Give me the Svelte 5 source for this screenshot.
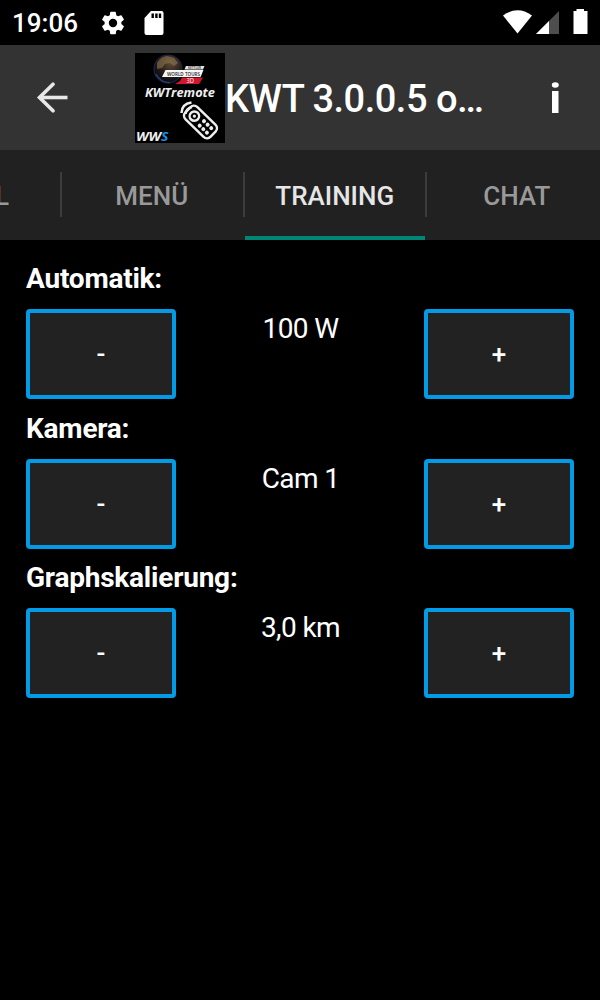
<script>
    let activeTab = $state('TRAINING');
    let watt = $state(100);
    let cam = $state(1);
    let scale = $state(3);

    const tabs = ['MENÜ', 'TRAINING', 'CHAT'];

    let controls = $derived([
        { label: 'Automatik:', value: `${watt} W`, step: (d) => (watt += d * 5) },
        { label: 'Kamera:', value: `Cam ${cam}`, step: (d) => (cam = Math.max(1, cam + d)) },
        { label: 'Graphskalierung:', value: `${scale.toFixed(1).replace('.', ',')} km`, step: (d) => (scale = Math.max(0.5, scale + d * 0.5)) }
    ]);
</script>

<div class="screen">
    <div class="statusbar">
        <span class="time">19:06</span>
        <svg class="gear" width="28" height="28" viewBox="0 0 24 24" fill="#fff">
            <path d="M19.14 12.94c.04-.3.06-.61.06-.94s-.02-.64-.07-.94l2.03-1.58a.49.49 0 0 0 .12-.61l-1.92-3.32a.49.49 0 0 0-.59-.22l-2.39.96a7 7 0 0 0-1.62-.94l-.36-2.54A.48.48 0 0 0 13.92 2.4h-3.84a.48.48 0 0 0-.47.41l-.36 2.54a7.3 7.3 0 0 0-1.62.94l-2.39-.96a.48.48 0 0 0-.59.22L2.74 8.87a.48.48 0 0 0 .12.61l2.03 1.58c-.05.3-.09.63-.09.94s.02.64.07.94l-2.03 1.58a.49.49 0 0 0-.12.61l1.92 3.32c.12.22.37.29.59.22l2.39-.96c.5.38 1.03.7 1.62.94l.36 2.54c.05.24.24.41.48.41h3.84c.24 0 .44-.17.47-.41l.36-2.54a7 7 0 0 0 1.62-.94l2.39.96c.22.08.47 0 .59-.22l1.92-3.32a.48.48 0 0 0-.12-.61zM12 15.6a3.6 3.6 0 1 1 0-7.2 3.6 3.6 0 0 1 0 7.2z" />
        </svg>
        <svg class="sd" width="20" height="24" viewBox="0 0 20 24">
            <path d="M7 0h10.5a2 2 0 0 1 2 2v20a2 2 0 0 1-2 2h-15a2 2 0 0 1-2-2V7z" fill="#fff" />
            <path d="M7.5 2.500h2.400v4.600H7.500zM11.200 2.500h2.400v4.600h-2.400zM14.800 2.500h2.400v4.600h-2.400z" fill="#000" />
        </svg>
        <span class="spacer"></span>
        <svg width="97" height="45" viewBox="503 0 97 45">
            <path d="M503 15.500Q517.500 5 532 15.500L517.500 33.500z" fill="#fff" />
            <path d="M559 11v23h-23z" fill="#4e4e4e" />
            <path d="M549 21v13h-13z" fill="#fff" />
            <path d="M576.500 9h7.500v2h3.500v23h-14V11h3z" fill="#fff" />
        </svg>
    </div>

    <header class="toolbar">
        <button class="back" aria-label="Zurück">
            <svg width="32" height="32" viewBox="0 0 32 32" fill="none" stroke="#e8e8e8" stroke-width="3.600">
                <path d="M31.500 15.500H4" />
                <path d="M17 2.200L3.500 15.500l13.500 13.300" stroke-linecap="round" />
            </svg>
        </button>
        <svg class="logo" width="90" height="90" viewBox="0 0 90 90">
            <defs>
                <radialGradient id="globe" cx=".6" cy=".3" r=".7">
                    <stop offset="0" stop-color="#5e4b35" />
                    <stop offset=".6" stop-color="#241c18" />
                    <stop offset="1" stop-color="#060915" />
                </radialGradient>
            </defs>
            <rect width="90" height="90" fill="#000" />
            <circle cx="33" cy="16" r="14" fill="url(#globe)" stroke="#1d2548" stroke-width="1.200" />
            <path d="M22 10q3-6 10-7l7 2 4 5-4 3-4-3-5 1-3 4-5 1z" fill="#8f764f" opacity=".6" />
            <path d="M21 21q5 9 14 8.500" fill="none" stroke="#34406e" stroke-width="1.300" />
            <path d="M51 13h18.500l-1.500 3.500H49.500z" fill="#e6e6e6" />
            <path d="M47 24.500h21L64 31H40l5-3z" fill="#cf1830" />
            <path d="M30.500 17h38L65.500 24H27z" fill="#f7f7f7" />
            <text x="32" y="22.700" font-size="6" font-weight="600" fill="#222" textLength="33" lengthAdjust="spacingAndGlyphs">WORLD TOURS</text>
            <text x="53" y="16.200" font-size="3.600" font-weight="700" fill="#555" textLength="13" lengthAdjust="spacingAndGlyphs">KETTLER</text>
            <text x="51.500" y="30" font-size="6.500" fill="#fff" textLength="7.500" lengthAdjust="spacingAndGlyphs">3D</text>
            <text class="brand" x="10" y="44.200" font-size="12.800" textLength="70" lengthAdjust="spacingAndGlyphs">KWTremote</text>
            <text class="brand" x="1" y="87.500" font-size="13" textLength="32.500" lengthAdjust="spacingAndGlyphs">WW<tspan fill="#1493e6">S</tspan></text>
            <g fill="none" stroke="#eee" stroke-width="2.500">
                <g transform="translate(65.500 69) rotate(44)">
                    <rect x="-17.500" y="-8.500" width="35" height="17" rx="5" />
                    <circle cx="-8.500" cy="0" r="4.700" />
                    <circle cx="-8.500" cy="0" r="1.600" fill="#eee" stroke="none" />
                    <g fill="#eee" stroke="none">
                        <circle cx="2" cy="-3" r="2" /><circle cx="7" cy="-3" r="2" /><circle cx="12" cy="-3" r="2" />
                        <circle cx="2" cy="3.200" r="2" /><circle cx="7" cy="3.200" r="2" /><circle cx="12" cy="3.200" r="2" />
                    </g>
                </g>
                <path d="M46.500 60q0-9 10-10.500M50.500 61q.5-5.500 6.500-7" />
            </g>
        </svg>
        <h1>KWT 3.0.0.5 o…</h1>
        <button class="info" aria-label="Info">
            <svg width="8" height="31" viewBox="0 0 8 31" fill="#fff">
                <ellipse cx="4.300" cy="3" rx="3.500" ry="2.800" />
                <path d="M1 9h6.500v22H1z" />
            </svg>
        </button>
    </header>

    <nav class="tabs">
        <span class="cut">L</span>
        {#each tabs as tab}
            <button class="tab" class:active={tab === activeTab} onclick={() => (activeTab = tab)}>{tab}</button>
        {/each}
    </nav>

    <main>
        {#each controls as c}
            <section>
                <h2>{c.label}</h2>
                <div class="row">
                    <button class="step" onclick={() => c.step(-1)}>-</button>
                    <span class="value">{c.value}</span>
                    <button class="step" onclick={() => c.step(1)}>+</button>
                </div>
            </section>
        {/each}
    </main>
</div>

<style>
    :global(body) {
        background: #000;
    }
    .screen {
        width: 600px;
        height: 1000px;
        overflow: hidden;
        background: #000;
        color: #fff;
        font-family: Roboto, sans-serif;
    }
    button {
        border: 0;
        padding: 0;
        background: none;
        color: inherit;
        font-family: inherit;
    }
    .statusbar {
        display: flex;
        align-items: center;
        height: 45px;
        padding-left: 12px;
    }
    .time {
        width: 87px;
        padding-top: 2px;
        font-size: 26px;
        font-weight: 500;
        line-height: 45px;
    }
    .sd {
        margin-left: 17px;
    }
    .spacer {
        flex: 1;
    }

    /* Toolbar */
    .toolbar {
        display: flex;
        align-items: center;
        height: 105px;
        background: #333;
    }
    .back {
        display: flex;
        width: 100px;
        padding-left: 36px;
        margin-right: 35px;
        box-sizing: border-box;
    }
    .logo {
        flex: none;
        font-family: "Open Sans", sans-serif;
    }
    .brand {
        fill: #eee;
        font-style: italic;
        font-weight: 700;
    }
    h1 {
        width: 326px;
        margin: 0;
        padding-top: 2px;
        font-size: 38px;
        font-weight: 500;
        line-height: 50px;
        letter-spacing: -0.5px;
        white-space: nowrap;
    }
    .info {
        display: flex;
    }

    /* Tabs */
    .tabs {
        display: flex;
        height: 90px;
        background: #212121;
        overflow: hidden;
        font-size: 26px;
        font-weight: 500;
        color: #999;
    }
    .cut {
        display: flex;
        align-items: center;
        justify-content: flex-end;
        width: 9px;
        margin-right: 51px;
        padding-top: 2px;
    }
    .tab {
        display: flex;
        align-items: center;
        justify-content: center;
        flex: none;
        width: 182.5px;
        height: 90px;
        padding: 6px 0 4px 1px;
        font-size: 26px;
        font-weight: 500;
        box-sizing: border-box;
        background: linear-gradient(#3c3c3c, #3c3c3c) 0 22px / 2px 45px no-repeat;
    }
    .tab.active {
        padding-left: 2px;
        color: #e6e6e6;
        background:
            linear-gradient(#3c3c3c, #3c3c3c) 0 22px / 2px 45px no-repeat,
            linear-gradient(#008577, #008577) 2px 86px / 181px 4px no-repeat;
    }

    /* Controls */
    main {
        padding: 24px 26px;
    }
    section {
        height: 149.5px;
    }
    h2 {
        margin: 0;
        height: 45px;
        font-size: 28px;
        font-weight: 700;
        line-height: 30px;
        letter-spacing: -0.22px;
    }
    .row {
        display: flex;
        justify-content: space-between;
    }
    .step {
        width: 150px;
        height: 90px;
        border: 4px solid #039be5;
        border-radius: 4px;
        background: #222;
        font-size: 26px;
        font-weight: 500;
        box-sizing: border-box;
    }
    .value {
        padding: 4px 0 0 1px;
        font-size: 28px;
        line-height: 32px;
        letter-spacing: -0.6px;
    }
</style>
